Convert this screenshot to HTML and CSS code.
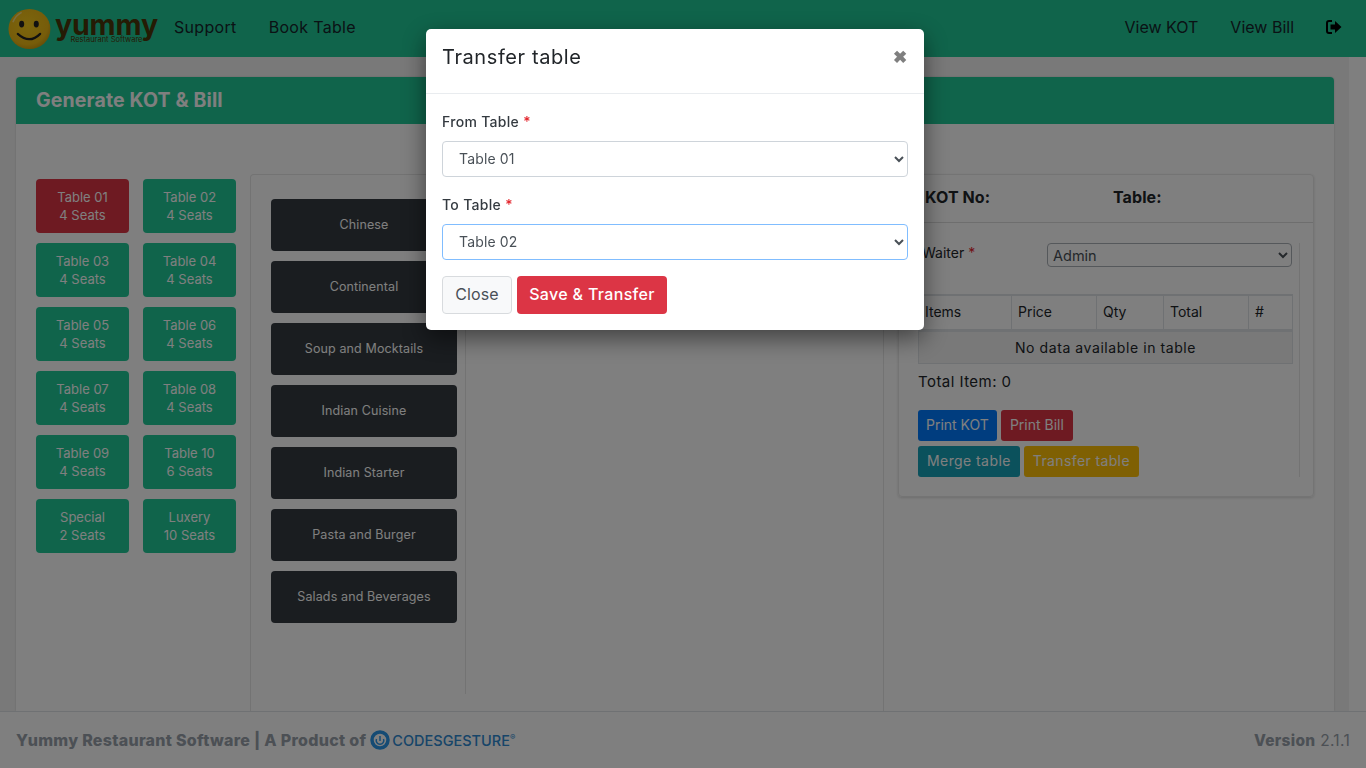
FILE: index.html
```html
<!DOCTYPE html>
<html lang="en">
<head>
<meta charset="utf-8">
<title>Yummy Restaurant Software</title>
<link rel="stylesheet" href="styles.css">
</head>
<body>
<header class="navbar">
  <div class="brand">
    <svg class="smiley" width="44" height="42" viewBox="0 0 44 42"><defs><radialGradient id="g" cx="45%" cy="40%" r="65%"><stop offset="0" stop-color="#f8cc1a"/><stop offset="0.75" stop-color="#eeb915"/><stop offset="1" stop-color="#c9950c"/></radialGradient></defs><ellipse cx="22" cy="21" rx="21.500" ry="20.500" fill="url(#g)"/><path d="M5 14Q8 7 14 4" stroke="#fff" stroke-opacity=".45" stroke-width="1.500" fill="none"/><ellipse cx="14" cy="16" rx="2.600" ry="3.500" fill="#222"/><ellipse cx="29" cy="16" rx="2.600" ry="3.500" fill="#222"/><path d="M10 26Q22 37 33 26" stroke="#222" stroke-width="2.200" fill="none" stroke-linecap="round"/></svg>
    <div class="wordmark"><span class="word">yummy</span><span class="tag">Restaurant Software</span></div>
  </div>
  <nav class="nav-left"><a>Support</a><a>Book Table</a></nav>
  <nav class="nav-right"><a>View KOT</a><a>View Bill</a>
    <svg class="logout" width="16" height="14" viewBox="0 0 16 14"><path d="M6 1H3a2 2 0 0 0-2 2v8a2 2 0 0 0 2 2h3" fill="none" stroke="#000" stroke-width="2"/><path d="M9 1l6.500 6L9 13V9.500H4.500v-5H9z" fill="#000"/></svg>
  </nav>
</header>
<main class="content">
  <section class="card">
    <h1 class="card-head">Generate KOT &amp; Bill</h1>
    <div class="card-body">
      <div class="tables">
        <button class="tbl tbl-red">Table 01<br>4 Seats</button>
        <button class="tbl">Table 02<br>4 Seats</button>
        <button class="tbl">Table 03<br>4 Seats</button>
        <button class="tbl">Table 04<br>4 Seats</button>
        <button class="tbl">Table 05<br>4 Seats</button>
        <button class="tbl">Table 06<br>4 Seats</button>
        <button class="tbl">Table 07<br>4 Seats</button>
        <button class="tbl">Table 08<br>4 Seats</button>
        <button class="tbl">Table 09<br>4 Seats</button>
        <button class="tbl">Table 10<br>6 Seats</button>
        <button class="tbl">Special<br>2 Seats</button>
        <button class="tbl">Luxery<br>10 Seats</button>
      </div>
      <div class="board">
        <div class="cats">
          <button class="cat">Chinese</button>
          <button class="cat">Continental</button>
          <button class="cat">Soup and Mocktails</button>
          <button class="cat">Indian Cuisine</button>
          <button class="cat">Indian Starter</button>
          <button class="cat">Pasta and Burger</button>
          <button class="cat">Salads and Beverages</button>
        </div>
        <div class="dishes"></div>
      </div>
      <div class="order">
        <div class="order-head"><b class="kot">KOT No:</b><b>Table:</b></div>
        <div class="order-body">
          <div class="waiter"><span class="waiter-label">Waiter <i class="req">*</i></span>
            <select class="mini-select"><option>Admin</option></select></div>
          <table class="items">
            <thead><tr><th class="c1">Items</th><th class="c2">Price</th><th class="c3">Qty</th><th class="c4">Total</th><th class="c5">#</th></tr></thead>
            <tbody><tr><td colspan="5">No data available in table</td></tr></tbody>
          </table>
          <p class="total">Total Item: 0</p>
          <div class="actions">
            <button class="act blue">Print KOT</button><button class="act red">Print Bill</button>
            <button class="act teal">Merge table</button><button class="act amber">Transfer table</button>
          </div>
        </div>
      </div>
    </div>
  </section>
</main>
<footer class="footer">
  <div class="foot-left"><b>Yummy Restaurant Software | A Product of</b>
    <svg class="cg" width="20" height="20" viewBox="0 0 20 20"><circle cx="10" cy="10" r="8" fill="none" stroke="#2a96e8" stroke-width="3.500"/><path d="M6.500 9a3.800 3.800 0 1 0 7 0" fill="none" stroke="#2a96e8" stroke-width="1.500"/><path d="M10 6v5" stroke="#2a96e8" stroke-width="1.500"/></svg>
    <span class="cg-word">CODESGESTURE<sup>®</sup></span></div>
  <div class="foot-right"><b>Version</b> 2.1.1</div>
</footer>
<div class="backdrop"></div>
<div class="modal">
  <div class="modal-head"><h2>Transfer table</h2><span class="x">✖</span></div>
  <div class="modal-body">
    <label class="lbl">From Table <i class="req">*</i></label>
    <select class="field"><option>Table 01</option></select>
    <label class="lbl">To Table <i class="req">*</i></label>
    <select class="field focus"><option>Table 02</option></select>
    <div class="modal-actions"><button class="btn-close">Close</button><button class="btn-save">Save &amp; Transfer</button></div>
  </div>
</div>
</body>
</html>
```
FILE: styles.css
```css
* { box-sizing: border-box; }
html, body { margin: 0; height: 100%; }
body {
  height: 768px; overflow: hidden; display: flex; flex-direction: column;
  background: #fff; color: #212529;
  font-family: "Inter", "Open Sans", "Liberation Sans", sans-serif;
}
button { font-family: inherit; border: 0; }
.navbar { height: 57px; flex: none; background: #20c997; display: flex; align-items: center; padding: 0 24px 3px 8px; }
.brand { display: flex; align-items: center; width: 150px; margin-top: 3px; }
.wordmark { display: flex; flex-direction: column; line-height: 1; margin: -2px 0 0 4px; }
.word { font-size: 28.500px; font-weight: 700; color: #4a3608; letter-spacing: -.1px; line-height: 24px; }
.tag { font-size: 7.500px; color: #4a3608; text-align: center; line-height: 6px; margin-top: 0; }
.nav-left, .nav-right { display: flex; align-items: center; gap: 32px; font-size: 16px; color: #16252a; }
.nav-left { margin-left: 16px; letter-spacing: .32px; }
.nav-right { margin-left: auto; }
.content { flex: 1; min-height: 0; overflow: hidden; background: #f3f3f3; margin-right: 17px; padding: 20px 15px 0 16px; }
.card { height: 100%; background: #fff; border-radius: 4px 4px 0 0; box-shadow: 0 0 2px rgba(0,0,0,.2); }
.card-head { margin: 0; height: 47px; background: #20c997; color: #fff; font-size: 19.500px; font-weight: 700; letter-spacing: .15px; line-height: 47px; padding-left: 20px; border-radius: 4px 4px 0 0; }
.card-body { display: flex; align-items: flex-start; padding: 50px 20px 0; height: 600px; }
.tables { width: 200px; flex: none; display: grid; grid-template-columns: 93px 93px; column-gap: 14px; grid-auto-rows: 54px; row-gap: 10px; padding-top: 5px; }
.tbl { background: #20c997; color: #fff; font-size: 13px; line-height: 18px; border-radius: 4px; padding: 0 0 1px; }
.tbl-red { background: #dc3545; }
.board { width: 634px; height: 560px; flex: none; margin-left: 14px; display: flex; align-items: flex-start; border: 1px solid #e6e6e6; border-bottom: 0; border-radius: 4px 4px 0 0; }
.cats { width: 215px; height: 519px; flex: none; padding: 24px 8px 0 20px; display: flex; flex-direction: column; gap: 10px; border-right: 1px solid #e6e6e6; }
.cat { height: 52px; flex: none; background: #343a40; color: #fff; font-size: 12.500px; letter-spacing: .12px; border-radius: 4px; padding: 0 0 1px; }
.dishes { flex: 1; }
.order { width: 416px; height: 323px; margin-left: 14px; flex: none; border: 1px solid #e8e8e8; border-radius: 4px; box-shadow: 0 1px 3px rgba(0,0,0,.15); }
.order-head { height: 48px; border-bottom: 1px solid #dcdcdc; font-size: 16px; letter-spacing: .1px; display: flex; align-items: center; padding: 0 0 4px 26px; }
.kot { width: 188px; }
.order-body { height: 234px; margin: 20px 13px 0 0; padding: 0 7px 0 19px; border-right: 1px solid #e6e6e6; }
.waiter { display: flex; justify-content: space-between; height: 51px; font-size: 14px; }
.waiter-label { padding: 1px 0 0 4px; color: #212529; }
.req { color: #e3242b; font-style: normal; }
.mini-select { width: 245px; height: 24px; font: inherit; font-size: 14.500px; color: #495057; background: #fff; border: 1px solid #aab0b6; border-radius: 4px; padding: 0 1px; }
.items { width: 375px; border-collapse: collapse; font-size: 14px; margin-bottom: 0; }
.items th { height: 35px; font-weight: 400; text-align: left; border: 1px solid #dee2e6; border-top-width: 2px; border-bottom-width: 3px; padding: 0 6px 1px; }
.items td { height: 33px; text-align: center; background: #f2f2f2; border: 1px solid #dee2e6; letter-spacing: .58px; }
.c1 { width: 93px; } .c2 { width: 85px; } .c3 { width: 67px; } .c4 { width: 85px; } .c5 { width: 44px; }
.total { margin: 6px 0 0; font-size: 15px; letter-spacing: .45px; line-height: 24px; }
.actions { margin-top: 16px; width: 250px; display: flex; flex-wrap: wrap; gap: 5px 4px; }
.act { height: 31px; color: #fff; font-size: 14px; border-radius: 3px; padding: 0 8px 1px; }
.blue { background: #007bff; }
.red { background: #dc3545; padding: 0 9px 1px; }
.teal { background: #17a2b8; letter-spacing: .42px; padding: 0 9px 1px; }
.amber { background: #ffc107; letter-spacing: .38px; padding: 0 9px 1px; }
.footer { height: 57px; flex: none; background: #fff; border-top: 1px solid #dee2e6; display: flex; align-items: center; justify-content: space-between; padding: 0 16px; font-size: 16px; color: #98a1aa; position: relative; }
.foot-left { display: flex; align-items: center; letter-spacing: .3px; }
.foot-left b { font-weight: 800; }
.cg { margin-left: 4px; }
.cg-word { color: #2f8ad2; font-size: 14.500px; margin-left: 2px; font-weight: 500; letter-spacing: 0; }
.cg-word sup { font-size: 8px; }
.foot-right { font-size: 15.500px; letter-spacing: .3px; }
.foot-right b { font-weight: 800; }
.backdrop { position: fixed; inset: 0; background: rgba(0,0,0,.5); }
.modal { position: fixed; left: 426px; top: 29px; width: 498px; height: 301px; background: #fff; border-radius: 5px; box-shadow: 0 8px 24px rgba(0,0,0,.5); }
.modal-head { height: 65px; border-bottom: 1px solid #e9ecef; display: flex; align-items: center; justify-content: space-between; padding: 0 17px 8px 16px; }
.modal-head h2 { margin: 0; font-size: 20px; font-weight: 400; letter-spacing: .6px; color: #212529; }
.x { color: #7f7f7f; font-size: 17px; font-weight: 700; }
.modal-body { padding: 17px 16px 0 }
.lbl { display: block; font-size: 14px; line-height: 21px; height: 30px; font-weight: 500; letter-spacing: .3px; color: #343a40; }
.field { display: block; width: 466px; height: 36px; margin-bottom: 17px; font: inherit; font-size: 14px; letter-spacing: .15px; color: #495057; background: #fff; border: 1px solid #ced4da; border-radius: 4px; padding: 0 12px 1px; text-indent: 0; }
.field.focus { border-color: #80bdff; }
.modal-actions { display: flex; gap: 5px; margin-top: -1px; }
.btn-close { height: 38px; width: 70px; font-size: 16px; letter-spacing: .15px; color: #495057; background: #f8f9fa; border: 1px solid #d8dbde; border-radius: 4px; padding-bottom: 3px; }
.btn-save { height: 38px; width: 150px; font-size: 16px; font-weight: 500; letter-spacing: .33px; color: #fff; background: #dc3545; border-radius: 4px; padding: 0 0 2px; }
```
